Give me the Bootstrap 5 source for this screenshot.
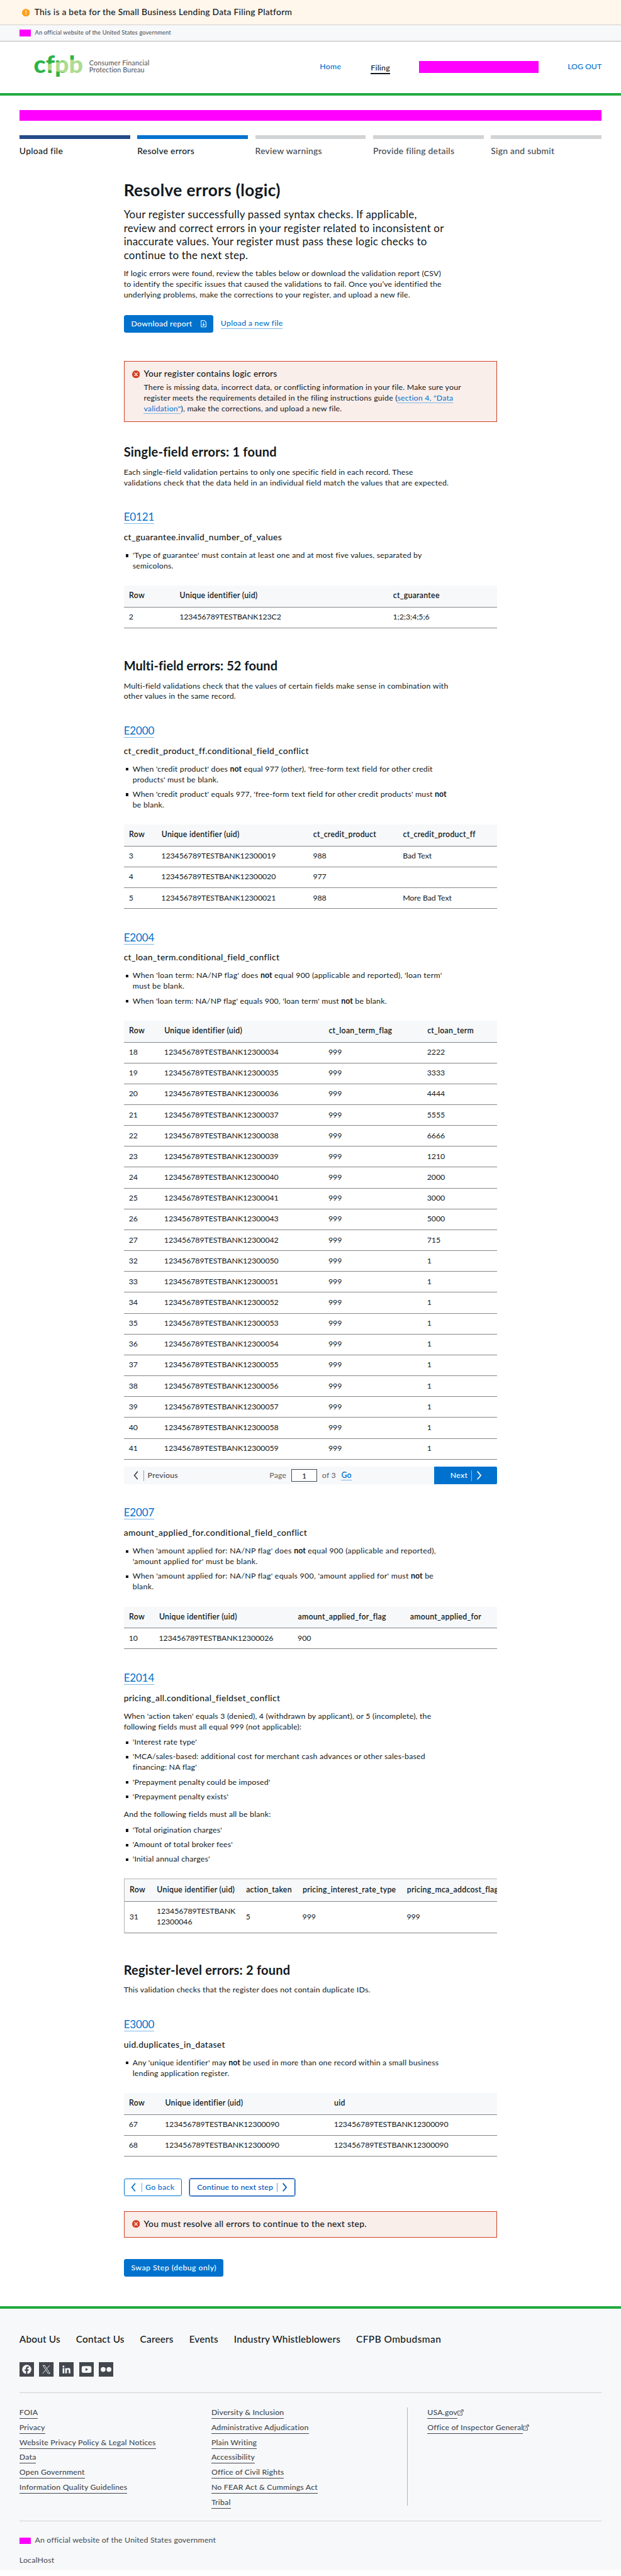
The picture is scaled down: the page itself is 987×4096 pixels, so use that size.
<!DOCTYPE html>
<html lang="en">
<head>
<meta charset="utf-8">
<meta name="viewport" content="width=device-width, initial-scale=1">
<title>Resolve errors (logic)</title>
<link href="https://cdn.jsdelivr.net/npm/bootstrap@5.3.0/dist/css/bootstrap.min.css" rel="stylesheet">
<script src="https://cdn.jsdelivr.net/npm/bootstrap@5.3.0/dist/js/bootstrap.bundle.min.js" defer></script>
<style>
/* --u is one design unit; every measure below is a multiple of it */
:root{--u:.7711px;--ink:#101820;--gray:#43484e;--blue:#0072ce;--green:#20aa3f;--line:#838589}
body{font-family:Lato,"Open Sans",sans-serif;font-size:calc(16*var(--u));line-height:calc(22*var(--u));letter-spacing:.0166em;color:var(--ink);background:#fff;overflow-x:hidden}
p,h1,h2,h3,h4,ul,table.err-tbl{margin:0}
.page-pad{padding-left:calc(40*var(--u));padding-right:calc(40*var(--u))}
.redact{background:#f0f;flex:none}
.flag{width:calc(24*var(--u));height:calc(13*var(--u));margin-right:calc(8*var(--u))}
.beta-bar{height:calc(52.5*var(--u));background:#fff6ec;border-bottom:1px solid #d3d0cc;font-size:calc(18*var(--u));font-weight:500;letter-spacing:.0185em;padding-left:calc(45*var(--u));gap:calc(10*var(--u))}
.gov-bar{height:calc(32.5*var(--u));background:#f7f8fa;border-bottom:1px solid #b4b5b6;font-size:calc(12*var(--u));letter-spacing:.0143em;color:var(--gray)}
.site-head{height:calc(112*var(--u));border-bottom:calc(5.5*var(--u)) solid var(--green);font-weight:500;letter-spacing:.02em}
.site-head a{color:var(--blue);text-decoration:none}
.site-head a.here{color:var(--ink);border-bottom:2px solid var(--ink);line-height:calc(23*var(--u));margin-top:calc(5*var(--u));margin-left:calc(61*var(--u))}
.site-head a.logout{letter-spacing:-.003em}
.user-box{width:calc(246*var(--u));height:calc(24.5*var(--u));margin:0 calc(60*var(--u))}
.logo{width:calc(245*var(--u));height:calc(64*var(--u));margin-left:calc(27*var(--u));margin-bottom:calc(2*var(--u));overflow:visible}
.svg-i{display:block;flex:none}
.i16{width:calc(16*var(--u));height:calc(16*var(--u))}
.i13{width:calc(13*var(--u));height:calc(13*var(--u));margin-top:calc(4*var(--u))}
.i30{width:calc(30*var(--u));height:calc(30*var(--u))}
.chev{width:calc(10*var(--u));height:calc(18*var(--u))}
.steps{gap:calc(15*var(--u));margin-top:calc(30*var(--u));font-size:calc(18*var(--u));font-weight:500;letter-spacing:.02em}
.steps>div{border-top:calc(8*var(--u)) solid #d2d3d5;padding-top:calc(14*var(--u));color:var(--gray)}
.steps>.done{border-color:#254b87;color:var(--ink)}
.steps>.now{border-color:var(--blue);color:var(--ink)}
.content-col{width:calc(770*var(--u));margin:calc(47.4*var(--u)) auto 0}
h1{font-size:calc(34*var(--u));line-height:calc(42.5*var(--u));font-weight:700;letter-spacing:.014em}
.intro{font-size:calc(22*var(--u));line-height:calc(27.75*var(--u));letter-spacing:.0148em;margin:calc(15.5*var(--u)) 0 calc(14.6*var(--u))}
h2{font-size:calc(26*var(--u));line-height:calc(32.5*var(--u));font-weight:700;letter-spacing:.0105em}
h2.multi{letter-spacing:.003em}
h2+p{margin-top:calc(15.2*var(--u))}
.txt-link{color:var(--blue);text-decoration:none;border-bottom:1px solid #7fb8e6}
.btn{--bs-btn-border-radius:calc(4*var(--u));font-size:calc(16*var(--u));line-height:calc(20*var(--u));font-weight:500;letter-spacing:.024em;height:calc(36*var(--u));padding:0 calc(14*var(--u));display:inline-flex;align-items:center;border-width:1px;white-space:nowrap}
.btn-primary{--bs-btn-bg:var(--blue);--bs-btn-border-color:var(--blue)}
.btn-outline-primary{--bs-btn-color:var(--blue);--bs-btn-border-color:var(--blue)}
.btn-focused{--bs-btn-color:#0050b4;--bs-btn-border-color:#0050b4;outline:1px dotted #0050b4;letter-spacing:.012em}
.btn .bar{width:1px;height:calc(19*var(--u));background:currentColor;opacity:.6}
.bar-r{margin:0 calc(11*var(--u)) 0 calc(7*var(--u))}
.bar-l{margin:0 calc(7.5*var(--u)) 0 calc(11*var(--u))}
.err-box{background:#faeeeb;border:1px solid #d14124;border-radius:0;padding:calc(14.2*var(--u)) calc(15.5*var(--u));color:var(--ink);margin:0;gap:calc(8.5*var(--u))}
.err-box h4{font-size:calc(18*var(--u));line-height:calc(22*var(--u));font-weight:500;letter-spacing:.0184em}
.err-box svg{margin-top:calc(3.5*var(--u))}
.rule{margin-top:calc(44.6*var(--u))}
.rule h3{font-size:calc(22*var(--u));line-height:calc(27.5*var(--u));font-weight:400;letter-spacing:-.005em}
.rule h3 a{display:inline-block;height:calc(28.7*var(--u));vertical-align:top}
.rule h4{font-size:calc(18*var(--u));line-height:calc(22*var(--u));font-weight:500;letter-spacing:.024em;margin:calc(16.4*var(--u)) 0 calc(15.7*var(--u))}
.sq{list-style:none;padding:0 0 0 calc(18.3*var(--u))}
.sq li+li{margin-top:calc(8*var(--u))}
.sq li::before{content:"";float:left;width:calc(5*var(--u));height:calc(5.5*var(--u));background:var(--ink);margin:calc(8.5*var(--u)) 0 0 calc(-13.5*var(--u))}
.sq b{font-weight:700;letter-spacing:.005em}
.sq .loose{letter-spacing:.0225em}
.tbl-wrap{margin-top:calc(29*var(--u));overflow:hidden}
.err-tbl{--bs-table-color:var(--ink);table-layout:fixed;color:var(--ink);width:100%;border-collapse:separate;border-spacing:0}
.err-tbl>:not(caption)>*>*{padding:0 calc(10.5*var(--u));height:calc(43*var(--u));border-bottom:1px solid var(--line);letter-spacing:-.006em;white-space:nowrap;vertical-align:middle}
.err-tbl>thead>tr>th{height:calc(45*var(--u));background:#f7f8fa;font-weight:600;letter-spacing:.021em;padding-left:calc(11*var(--u))}
.err-tbl.wide{width:calc(960*var(--u));border-left:1px solid #b4b5b6;border-top:1px solid #b4b5b6}
.err-tbl.wide>thead>tr>th{height:calc(45.8*var(--u))}
.err-tbl.wide>tbody>tr>td{height:calc(65*var(--u))}
.pager{margin-top:calc(15*var(--u));height:calc(36*var(--u));background:#f7f8fa;border-radius:calc(4*var(--u));overflow:hidden;color:var(--gray);font-weight:500}
.pager .pg-side{flex:0 0 calc(130*var(--u))}
.pager .pg-mid{font-weight:400;color:#5a5d61}
.pager input{width:calc(52.5*var(--u));height:calc(26*var(--u));border:1px solid var(--gray);border-radius:0;padding:0;text-align:center;font-size:calc(16*var(--u));color:var(--ink);margin:0 calc(10.5*var(--u))}
.pager .bar{width:1px;height:calc(22*var(--u));background:currentColor;opacity:.5}
.site-foot{margin-top:calc(61*var(--u));background:#f7f8fa;border-top:calc(5.5*var(--u)) solid var(--green);padding-top:calc(50.5*var(--u));height:calc(544*var(--u));color:var(--gray)}
.foot-nav{gap:calc(32.3*var(--u));font-size:calc(20*var(--u));line-height:calc(25*var(--u));font-weight:500;letter-spacing:.011em;color:var(--ink)}
.foot-nav .caps{letter-spacing:.03em}
.social{gap:calc(11*var(--u));margin:calc(35*var(--u)) 0 calc(32.5*var(--u))}
.foot-hr{height:1px;background:#d2d3d5;margin:0}
.foot-links{margin:calc(29.5*var(--u)) 0 calc(31*var(--u));height:calc(202*var(--u));font-weight:500;letter-spacing:.0145em}
.foot-links a{display:table;color:var(--gray);text-decoration:none;border-bottom:1px solid var(--gray);line-height:calc(22*var(--u));height:calc(22.5*var(--u));margin-bottom:calc(7.5*var(--u));white-space:nowrap}
</style>
</head>
<body>
<svg width="0" height="0" class="position-absolute">
  <symbol id="chev-r" viewBox="0 0 10 18"><path d="M1.5 1.5 8 9l-6.500 7.500" fill="none" stroke="currentColor" stroke-width="2.200" stroke-linecap="round" stroke-linejoin="round"/></symbol>
  <symbol id="chev-l" viewBox="0 0 10 18"><path d="M8.500 1.500 2 9l6.500 7.500" fill="none" stroke="currentColor" stroke-width="2.200" stroke-linecap="round" stroke-linejoin="round"/></symbol>
  <symbol id="err" viewBox="0 0 16 16"><circle cx="8" cy="8" r="8" fill="#d14124"/><path d="M5 5l6 6M11 5l-6 6" stroke="#fff" stroke-width="1.500" stroke-linecap="round"/></symbol>
  <symbol id="ext" viewBox="0 0 13 13"><path d="M8 3.500H1v8.500h8.500V5.500M4.500 8.500 11.800 1.200M7.800 1h4.200v4.200" fill="none" stroke="currentColor" stroke-width="1.200"/></symbol>
</svg>

<div class="beta-bar d-flex align-items-center">
  <svg class="svg-i i16" viewBox="0 0 16 16"><circle cx="8" cy="8" r="8" fill="#ff9e1b"/><path d="M8 3.500v5.500" stroke="#fff" stroke-width="1.600" stroke-linecap="round"/><circle cx="8" cy="12" r="1" fill="#fff"/></svg>
  <span>This is a beta for the Small Business Lending Data Filing Platform</span>
</div>
<div class="gov-bar page-pad d-flex align-items-center"><span class="redact flag"></span>An official website of the United States government</div>

<header class="site-head page-pad d-flex align-items-center">
  <svg class="logo svg-i" viewBox="67 110 245 64" aria-label="CFPB">
    <defs><pattern id="beam" patternUnits="userSpaceOnUse" x="60" y="100" width="260" height="80"><path d="M0 0H260V80H0Z" fill="#2cb34a"/><path d="M39 37.500 78 28.500 85 28H115V57H85L39 49.500Z" fill="#addc91"/></pattern></defs>
    <text x="69" y="155" textLength="102" lengthAdjust="spacingAndGlyphs" fill="url(#beam)" font-family="Lato,sans-serif" font-weight="900" font-size="49" letter-spacing="0">cfpb</text>
    <g font-family="Lato,sans-serif" font-size="14" letter-spacing=".1" fill="#5a5d61">
      <text x="183.500" y="139.500" textLength="124">Consumer Financial</text>
      <text x="183.500" y="154" textLength="114">Protection Bureau</text>
    </g>
  </svg>
  <nav class="d-flex align-items-center ms-auto">
    <a href="#">Home</a>
    <a href="#" class="here">Filing</a>
    <span class="redact user-box"></span>
    <a href="#" class="logout">LOG OUT</a>
  </nav>
</header>

<div class="page-pad">
  <div class="redact" style="height:calc(23*var(--u));margin-top:calc(29.500*var(--u))"></div>
  <div class="steps d-flex">
    <div class="col done">Upload file</div><div class="col now">Resolve errors</div><div class="col">Review warnings</div><div class="col">Provide filing details</div><div class="col">Sign and submit</div>
  </div>
</div>

<main class="content-col">
  <h1>Resolve errors (logic)</h1>
  <p class="intro">Your register successfully passed syntax checks. If applicable,<br>review and correct errors in your register related to inconsistent or<br>inaccurate values. Your register must pass these logic checks to<br>continue to the next step.</p>
  <p>If logic errors were found, review the tables below or download the validation report (CSV)<br>to identify the specific issues that caused the validations to fail. Once you’ve identified the<br>underlying problems, make the corrections to your register, and upload a new file.</p>
  <div class="d-flex align-items-center" style="margin-top:calc(29.800*var(--u))">
    <a class="btn btn-primary" href="#" style="width:calc(185*var(--u))">Download report<span class="bar bar-r"></span>
      <svg class="svg-i" style="width:calc(12*var(--u));height:calc(15*var(--u))" viewBox="0 0 12 15"><path d="M1 1h6.500L11 4.500V14H1ZM6 4.500v6.500M3.600 8.800 6 11.200l2.400-2.400" fill="none" stroke="#fff" stroke-width="1.300"/></svg></a>
    <a class="txt-link" href="#" style="margin-left:calc(15*var(--u));font-weight:500;letter-spacing:.022em;line-height:calc(19*var(--u))">Upload a new file</a>
  </div>
  <div class="err-box alert d-flex align-items-start" style="margin-top:calc(59*var(--u));height:calc(125*var(--u))">
    <svg class="svg-i i16"><use href="#err"/></svg>
    <div><h4>Your register contains logic errors</h4>
    <p style="margin-top:calc(6.200*var(--u))">There is missing data, incorrect data, or conflicting information in your file. Make sure your<br>register meets the requirements detailed in the filing instructions guide (<a class="txt-link" href="#">section 4, "Data</a><br><a class="txt-link" href="#">validation"</a>), make the corrections, and upload a new file.</p></div>
  </div>

  <h2 style="margin-top:calc(45.500*var(--u))">Single-field errors: 1 found</h2>
  <p>Each single-field validation pertains to only one specific field in each record. These<br>validations check that the data held in an individual field match the values that are expected.</p>

  <section class="rule">
    <h3><a class="txt-link" href="#">E0121</a></h3>
    <h4>ct_guarantee.invalid_number_of_values</h4>
    <ul class="sq"><li>'Type of guarantee' must contain at least one and at most five values, separated by<br>semicolons.</li></ul>
    <div class="tbl-wrap"><table class="table err-tbl">
      <colgroup><col style="width:13.55%"><col style="width:57.150%"><col></colgroup>
      <thead><tr><th>Row</th><th>Unique identifier (uid)</th><th>ct_guarantee</th></tr></thead>
      <tbody><tr><td>2</td><td>123456789TESTBANK123C2</td><td>1;2;3;4;5;6</td></tr></tbody>
    </table></div>
  </section>

  <h2 class="multi" style="margin-top:calc(60.700*var(--u))">Multi-field errors: 52 found</h2>
  <p>Multi-field validations check that the values of certain fields make sense in combination with<br>other values in the same record.</p>

  <section class="rule">
    <h3><a class="txt-link" href="#">E2000</a></h3>
    <h4>ct_credit_product_ff.conditional_field_conflict</h4>
    <ul class="sq"><li>When 'credit product' does <b>not</b> equal 977 (other), 'free-form text field for other credit<br>products' must be blank.</li><li>When 'credit product' equals 977, 'free-form text field for other credit products' must <b>not</b><br>be blank.</li></ul>
    <div class="tbl-wrap"><table class="table err-tbl">
      <colgroup><col style="width:8.700%"><col style="width:40.600%"><col style="width:24.050%"><col></colgroup>
      <thead><tr><th>Row</th><th>Unique identifier (uid)</th><th>ct_credit_product</th><th>ct_credit_product_ff</th></tr></thead>
      <tbody>
        <tr><td>3</td><td>123456789TESTBANK12300019</td><td>988</td><td>Bad Text</td></tr>
        <tr><td>4</td><td>123456789TESTBANK12300020</td><td>977</td><td></td></tr>
        <tr><td>5</td><td>123456789TESTBANK12300021</td><td>988</td><td>More Bad Text</td></tr>
      </tbody>
    </table></div>
  </section>

  <section class="rule">
    <h3><a class="txt-link" href="#">E2004</a></h3>
    <h4>ct_loan_term.conditional_field_conflict</h4>
    <ul class="sq"><li class="loose">When 'loan term: NA/NP flag' does <b>not</b> equal 900 (applicable and reported), 'loan term'<br>must be blank.</li><li>When 'loan term: NA/NP flag' equals 900, 'loan term' must <b>not</b> be blank.</li></ul>
    <div class="tbl-wrap"><table class="table err-tbl">
      <colgroup><col style="width:9.450%"><col style="width:44%"><col style="width:26.400%"><col></colgroup>
      <thead><tr><th>Row</th><th>Unique identifier (uid)</th><th>ct_loan_term_flag</th><th>ct_loan_term</th></tr></thead>
      <tbody>
        <tr><td>18</td><td>123456789TESTBANK12300034</td><td>999</td><td>2222</td></tr>
        <tr><td>19</td><td>123456789TESTBANK12300035</td><td>999</td><td>3333</td></tr>
        <tr><td>20</td><td>123456789TESTBANK12300036</td><td>999</td><td>4444</td></tr>
        <tr><td>21</td><td>123456789TESTBANK12300037</td><td>999</td><td>5555</td></tr>
        <tr><td>22</td><td>123456789TESTBANK12300038</td><td>999</td><td>6666</td></tr>
        <tr><td>23</td><td>123456789TESTBANK12300039</td><td>999</td><td>1210</td></tr>
        <tr><td>24</td><td>123456789TESTBANK12300040</td><td>999</td><td>2000</td></tr>
        <tr><td>25</td><td>123456789TESTBANK12300041</td><td>999</td><td>3000</td></tr>
        <tr><td>26</td><td>123456789TESTBANK12300043</td><td>999</td><td>5000</td></tr>
        <tr><td>27</td><td>123456789TESTBANK12300042</td><td>999</td><td>715</td></tr>
        <tr><td>32</td><td>123456789TESTBANK12300050</td><td>999</td><td>1</td></tr>
        <tr><td>33</td><td>123456789TESTBANK12300051</td><td>999</td><td>1</td></tr>
        <tr><td>34</td><td>123456789TESTBANK12300052</td><td>999</td><td>1</td></tr>
        <tr><td>35</td><td>123456789TESTBANK12300053</td><td>999</td><td>1</td></tr>
        <tr><td>36</td><td>123456789TESTBANK12300054</td><td>999</td><td>1</td></tr>
        <tr><td>37</td><td>123456789TESTBANK12300055</td><td>999</td><td>1</td></tr>
        <tr><td>38</td><td>123456789TESTBANK12300056</td><td>999</td><td>1</td></tr>
        <tr><td>39</td><td>123456789TESTBANK12300057</td><td>999</td><td>1</td></tr>
        <tr><td>40</td><td>123456789TESTBANK12300058</td><td>999</td><td>1</td></tr>
        <tr><td>41</td><td>123456789TESTBANK12300059</td><td>999</td><td>1</td></tr>
      </tbody>
    </table></div>
    <div class="pager d-flex align-items-center justify-content-between">
      <div class="pg-side d-flex align-items-center" style="padding-left:calc(19.500*var(--u))"><svg class="svg-i chev"><use href="#chev-l"/></svg><span class="bar bar-l"></span>Previous</div>
      <div class="pg-mid d-flex align-items-center">Page<input type="text" value="1" aria-label="Page">of 3<a class="txt-link" href="#" style="margin-left:calc(11*var(--u));font-weight:600;line-height:calc(18*var(--u))">Go</a></div>
      <a class="btn btn-primary rounded-0 pg-side" href="#" style="padding-left:calc(32*var(--u))">Next<span class="bar bar-r"></span><svg class="svg-i chev"><use href="#chev-r"/></svg></a>
    </div>
  </section>

  <section class="rule">
    <h3><a class="txt-link" href="#">E2007</a></h3>
    <h4>amount_applied_for.conditional_field_conflict</h4>
    <ul class="sq"><li class="loose">When 'amount applied for: NA/NP flag' does <b>not</b> equal 900 (applicable and reported),<br>'amount applied for' must be blank.</li><li class="loose">When 'amount applied for: NA/NP flag' equals 900, 'amount applied for' must <b>not</b> be<br>blank.</li></ul>
    <div class="tbl-wrap"><table class="table err-tbl">
      <colgroup><col style="width:8.050%"><col style="width:37.150%"><col style="width:30.050%"><col></colgroup>
      <thead><tr><th>Row</th><th>Unique identifier (uid)</th><th>amount_applied_for_flag</th><th>amount_applied_for</th></tr></thead>
      <tbody><tr><td>10</td><td>123456789TESTBANK12300026</td><td>900</td><td></td></tr></tbody>
    </table></div>
  </section>

  <section class="rule">
    <h3><a class="txt-link" href="#">E2014</a></h3>
    <h4>pricing_all.conditional_fieldset_conflict</h4>
    <p style="margin-bottom:calc(10*var(--u))">When 'action taken' equals 3 (denied), 4 (withdrawn by applicant), or 5 (incomplete), the<br>following fields must all equal 999 (not applicable):</p>
    <ul class="sq"><li>'Interest rate type'</li><li>'MCA/sales-based: additional cost for merchant cash advances or other sales-based<br>financing: NA flag'</li><li>'Prepayment penalty could be imposed'</li><li>'Prepayment penalty exists'</li></ul>
    <p style="margin:calc(15*var(--u)) 0 calc(10*var(--u))">And the following fields must all be blank:</p>
    <ul class="sq"><li>'Total origination charges'</li><li>'Amount of total broker fees'</li><li>'Initial annual charges'</li></ul>
    <div class="tbl-wrap"><table class="table err-tbl wide">
      <colgroup><col style="width:calc(56*var(--u))"><col style="width:calc(184*var(--u))"><col style="width:calc(116.500*var(--u))"><col style="width:calc(215*var(--u))"><col></colgroup>
      <thead><tr><th>Row</th><th>Unique identifier (uid)</th><th>action_taken</th><th>pricing_interest_rate_type</th><th>pricing_mca_addcost_flag</th></tr></thead>
      <tbody><tr><td>31</td><td>123456789TESTBANK<br>12300046</td><td>5</td><td>999</td><td>999</td></tr></tbody>
    </table></div>
  </section>

  <h2 style="margin-top:calc(59.500*var(--u))">Register-level errors: 2 found</h2>
  <p>This validation checks that the register does not contain duplicate IDs.</p>

  <section class="rule">
    <h3><a class="txt-link" href="#">E3000</a></h3>
    <h4>uid.duplicates_in_dataset</h4>
    <ul class="sq"><li>Any 'unique identifier' may <b>not</b> be used in more than one record within a small business<br>lending application register.</li></ul>
    <div class="tbl-wrap"><table class="table err-tbl">
      <colgroup><col style="width:9.650%"><col style="width:45.250%"><col></colgroup>
      <thead><tr><th>Row</th><th>Unique identifier (uid)</th><th>uid</th></tr></thead>
      <tbody>
        <tr><td>67</td><td>123456789TESTBANK12300090</td><td>123456789TESTBANK12300090</td></tr>
        <tr><td>68</td><td>123456789TESTBANK12300090</td><td>123456789TESTBANK12300090</td></tr>
      </tbody>
    </table></div>
  </section>

  <div class="d-flex" style="margin-top:calc(45.800*var(--u));gap:calc(16*var(--u))">
    <a class="btn btn-outline-primary" href="#" style="width:calc(120*var(--u))"><svg class="svg-i chev"><use href="#chev-l"/></svg><span class="bar bar-l"></span>Go back</a>
    <a class="btn btn-outline-primary btn-focused" href="#" style="width:calc(217*var(--u))">Continue to next step<span class="bar bar-r"></span><svg class="svg-i chev"><use href="#chev-r"/></svg></a>
  </div>
  <div class="err-box alert d-flex align-items-start" style="margin-top:calc(30.800*var(--u));height:calc(54.500*var(--u))">
    <svg class="svg-i i16"><use href="#err"/></svg>
    <h4 style="letter-spacing:.022em">You must resolve all errors to continue to the next step.</h4>
  </div>
  <a class="btn btn-primary" href="#" style="margin-top:calc(44.600*var(--u));width:calc(206*var(--u));letter-spacing:.036em;vertical-align:top">Swap Step (debug only)</a>
</main>

<footer class="site-foot page-pad">
  <nav class="foot-nav d-flex"><span>About Us</span><span>Contact Us</span><span>Careers</span><span>Events</span><span>Industry Whistleblowers</span><span class="caps">CFPB Ombudsman</span></nav>
  <div class="social d-flex">
    <svg class="svg-i i30" viewBox="0 0 30 30"><path fill="#43484e" d="M0 0h30v30H0z"/><circle cx="15" cy="15" r="9.500" fill="#f7f8fa"/><path fill="#43484e" d="M13.300 25v-7.300h-2.500v-2.900h2.500v-2c0-2.700 1.500-4 3.900-4 .8 0 1.600.1 2 .2v2.400h-1.200c-1.300 0-1.700.7-1.700 1.600v1.800h2.800l-.5 2.900h-2.300V25Z"/></svg>
    <svg class="svg-i i30" viewBox="0 0 30 30"><path fill="#43484e" d="M0 0h30v30H0z"/><path fill="none" stroke="#f7f8fa" stroke-width="1.200" d="M8 6.700h3.700L22.500 23.300h-3.800ZM22 6.500l-6.600 7.600M13.900 16 7.500 23.500"/></svg>
    <svg class="svg-i i30" viewBox="0 0 30 30"><path fill="#43484e" d="M0 0h30v30H0z"/><path fill="#f7f8fa" d="M7.200 12.300h3.400V23H7.200zM12.600 12.300h3.200v1.500c.6-1 1.700-1.800 3.400-1.800 3.100 0 3.900 2 3.900 4.900V23h-3.400v-5.500c0-1.400-.2-2.700-1.800-2.700s-1.900 1.300-1.900 2.700V23h-3.400z"/><circle cx="8.900" cy="9" r="1.900" fill="#f7f8fa"/></svg>
    <svg class="svg-i i30" viewBox="0 0 30 30"><path fill="#43484e" d="M0 0h30v30H0z"/><rect x="5" y="8" width="20" height="14" rx="3.500" fill="#f7f8fa"/><path fill="#43484e" d="M13 12v6l5.200-3z"/></svg>
    <svg class="svg-i i30" viewBox="0 0 30 30"><path fill="#43484e" d="M0 0h30v30H0z"/><circle cx="9" cy="15" r="5" fill="#f7f8fa"/><circle cx="21" cy="15" r="5" fill="#f7f8fa"/></svg>
  </div>
  <div class="foot-hr"></div>
  <div class="foot-links d-flex">
    <div style="width:calc(395.600*var(--u))"><a href="#">FOIA</a><a href="#">Privacy</a><a href="#">Website Privacy Policy &amp; Legal Notices</a><a href="#">Data</a><a href="#">Open Government</a><a href="#">Information Quality Guidelines</a></div>
    <div style="width:calc(404*var(--u))"><a href="#">Diversity &amp; Inclusion</a><a href="#">Administrative Adjudication</a><a href="#">Plain Writing</a><a href="#">Accessibility</a><a href="#">Office of Civil Rights</a><a href="#">No FEAR Act &amp; Cummings Act</a><a href="#">Tribal</a></div>
    <div style="border-left:1px solid #b4b5b6;padding-left:calc(40*var(--u))">
      <div class="d-flex"><a href="#">USA.gov</a><svg class="svg-i i13"><use href="#ext"/></svg></div>
      <div class="d-flex"><a href="#">Office of Inspector General</a><svg class="svg-i i13"><use href="#ext"/></svg></div>
    </div>
  </div>
  <div class="foot-hr"></div>
  <div class="d-flex align-items-center" style="margin-top:calc(29*var(--u));letter-spacing:.0137em"><span class="redact flag"></span>An official website of the United States government</div>
  <div style="margin-top:calc(19.800*var(--u))">LocalHost</div>
</footer>
</body>
</html>
